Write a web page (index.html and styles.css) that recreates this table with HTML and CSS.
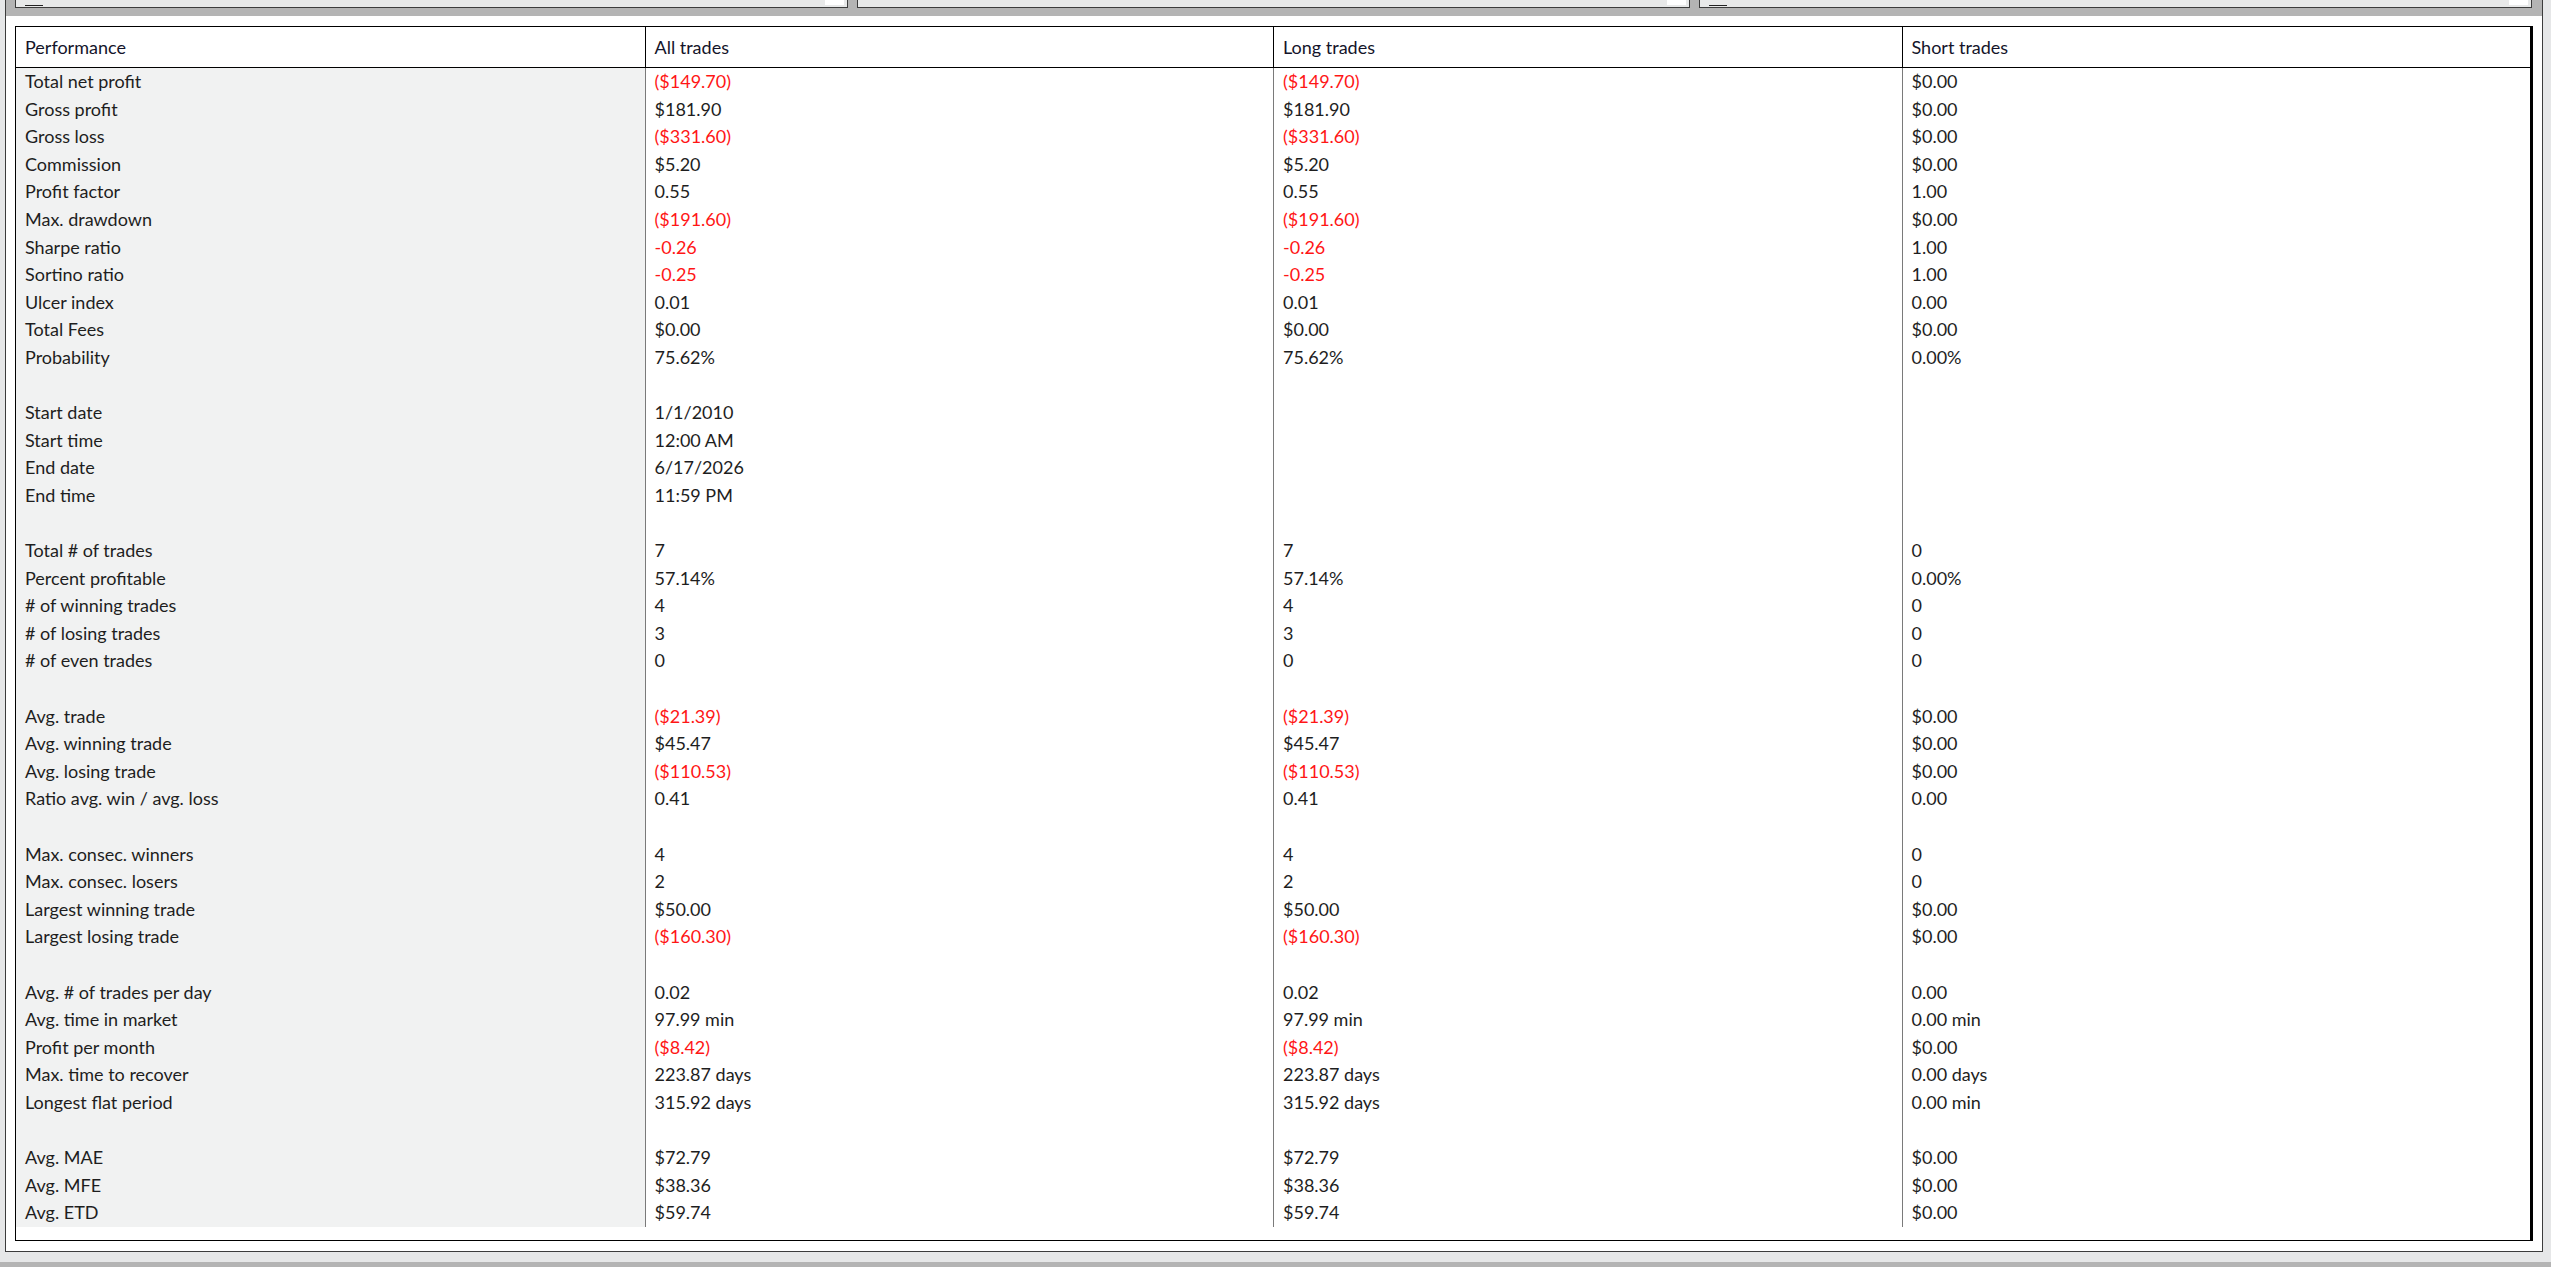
FILE: index.html
```html
<!DOCTYPE html>
<html>
<head>
<meta charset="utf-8">
<title>Performance</title>
<link rel="stylesheet" href="styles.css">
</head>
<body>
<div class="frame">
  <div class="toolbar">
    <div class="field"><span class="caret"></span><span class="btn"></span></div>
    <div class="field"><span class="btn"></span></div>
    <div class="field"><span class="caret"></span><span class="btn"></span></div>
  </div>
  <div class="content">
    <div class="grid-box">
      <table class="perf">
        <thead>
          <tr><th>Performance</th><th>All trades</th><th>Long trades</th><th>Short trades</th></tr>
        </thead>
        <tbody>
          <tr><td>Total net profit</td><td class="neg">($149.70)</td><td class="neg">($149.70)</td><td>$0.00</td></tr>
          <tr><td>Gross profit</td><td>$181.90</td><td>$181.90</td><td>$0.00</td></tr>
          <tr><td>Gross loss</td><td class="neg">($331.60)</td><td class="neg">($331.60)</td><td>$0.00</td></tr>
          <tr><td>Commission</td><td>$5.20</td><td>$5.20</td><td>$0.00</td></tr>
          <tr><td>Profit factor</td><td>0.55</td><td>0.55</td><td>1.00</td></tr>
          <tr><td>Max. drawdown</td><td class="neg">($191.60)</td><td class="neg">($191.60)</td><td>$0.00</td></tr>
          <tr><td>Sharpe ratio</td><td class="neg">-0.26</td><td class="neg">-0.26</td><td>1.00</td></tr>
          <tr><td>Sortino ratio</td><td class="neg">-0.25</td><td class="neg">-0.25</td><td>1.00</td></tr>
          <tr><td>Ulcer index</td><td>0.01</td><td>0.01</td><td>0.00</td></tr>
          <tr><td>Total Fees</td><td>$0.00</td><td>$0.00</td><td>$0.00</td></tr>
          <tr><td>Probability</td><td>75.62%</td><td>75.62%</td><td>0.00%</td></tr>
          <tr><td></td><td></td><td></td><td></td></tr>
          <tr><td>Start date</td><td>1/1/2010</td><td></td><td></td></tr>
          <tr><td>Start time</td><td>12:00 AM</td><td></td><td></td></tr>
          <tr><td>End date</td><td>6/17/2026</td><td></td><td></td></tr>
          <tr><td>End time</td><td>11:59 PM</td><td></td><td></td></tr>
          <tr><td></td><td></td><td></td><td></td></tr>
          <tr><td>Total # of trades</td><td>7</td><td>7</td><td>0</td></tr>
          <tr><td>Percent profitable</td><td>57.14%</td><td>57.14%</td><td>0.00%</td></tr>
          <tr><td># of winning trades</td><td>4</td><td>4</td><td>0</td></tr>
          <tr><td># of losing trades</td><td>3</td><td>3</td><td>0</td></tr>
          <tr><td># of even trades</td><td>0</td><td>0</td><td>0</td></tr>
          <tr><td></td><td></td><td></td><td></td></tr>
          <tr><td>Avg. trade</td><td class="neg">($21.39)</td><td class="neg">($21.39)</td><td>$0.00</td></tr>
          <tr><td>Avg. winning trade</td><td>$45.47</td><td>$45.47</td><td>$0.00</td></tr>
          <tr><td>Avg. losing trade</td><td class="neg">($110.53)</td><td class="neg">($110.53)</td><td>$0.00</td></tr>
          <tr><td>Ratio avg. win / avg. loss</td><td>0.41</td><td>0.41</td><td>0.00</td></tr>
          <tr><td></td><td></td><td></td><td></td></tr>
          <tr><td>Max. consec. winners</td><td>4</td><td>4</td><td>0</td></tr>
          <tr><td>Max. consec. losers</td><td>2</td><td>2</td><td>0</td></tr>
          <tr><td>Largest winning trade</td><td>$50.00</td><td>$50.00</td><td>$0.00</td></tr>
          <tr><td>Largest losing trade</td><td class="neg">($160.30)</td><td class="neg">($160.30)</td><td>$0.00</td></tr>
          <tr><td></td><td></td><td></td><td></td></tr>
          <tr><td>Avg. # of trades per day</td><td>0.02</td><td>0.02</td><td>0.00</td></tr>
          <tr><td>Avg. time in market</td><td>97.99 min</td><td>97.99 min</td><td>0.00 min</td></tr>
          <tr><td>Profit per month</td><td class="neg">($8.42)</td><td class="neg">($8.42)</td><td>$0.00</td></tr>
          <tr><td>Max. time to recover</td><td>223.87 days</td><td>223.87 days</td><td>0.00 days</td></tr>
          <tr><td>Longest flat period</td><td>315.92 days</td><td>315.92 days</td><td>0.00 min</td></tr>
          <tr><td></td><td></td><td></td><td></td></tr>
          <tr><td>Avg. MAE</td><td>$72.79</td><td>$72.79</td><td>$0.00</td></tr>
          <tr><td>Avg. MFE</td><td>$38.36</td><td>$38.36</td><td>$0.00</td></tr>
          <tr><td>Avg. ETD</td><td>$59.74</td><td>$59.74</td><td>$0.00</td></tr>
        </tbody>
      </table>
    </div>
  </div>
</div>
<div class="statusbar"></div>
</body>
</html>
```

FILE: styles.css
```css
html, body {
  margin: 0;
  padding: 0;
}
body {
  background: #e6e7e8;
  font-family: Lato, "Liberation Sans", sans-serif;
  font-size: 18px;
  color: #1e1e1e;
  height: 1267px;
  overflow: hidden;
}
.frame {
  margin-left: 5px;
  width: 2538px;
  box-sizing: border-box;
  border: 1px solid #3c3c3c;
  border-top: none;
  background: #fff;
}
.toolbar {
  height: 16px;
  background: #b4b4b4;
  display: flex;
  gap: 9px;
  padding-left: 9px;
  overflow: hidden;
}
.field {
  flex: 0 0 833px;
  height: 30px;
  margin-top: -22px;
  box-sizing: border-box;
  border: 1px solid #3c3c3c;
  background: #e8e9e9;
  position: relative;
}
.caret {
  position: absolute;
  left: 9px;
  bottom: 1px;
  width: 18px;
  height: 1px;
  background: #222;
}
.btn {
  position: absolute;
  right: 3px;
  bottom: 2px;
  width: 19px;
  height: 12px;
  background: #fff;
}
.content {
  padding: 10px 9px 10px 9px;
}
.grid-box {
  border: 1px solid #000;
  border-right-width: 3px;
  padding-bottom: 13px;
  background: #fff;
}
.perf {
  width: 100%;
  table-layout: fixed;
  border-collapse: separate;
  border-spacing: 0;
}
.perf th, .perf td {
  padding: 0 0 0 9px;
  text-align: left;
  font-weight: normal;
  white-space: nowrap;
  overflow: hidden;
}
.perf th {
  height: 40px;
  color: #14142a;
  border-bottom: 1px solid #000;
}
.perf th + th {
  border-left: 1px solid #000;
}
.perf td {
  height: 27.6px;
  line-height: 27.6px;
}
.perf td + td {
  border-left: 1px solid #7a7a7a;
}
.perf td:first-child {
  background: #f1f2f2;
}
.perf td.neg {
  color: #ff1616;
}
.statusbar {
  margin-top: 10px;
  height: 5px;
  background: #b4b4b4;
}
```
